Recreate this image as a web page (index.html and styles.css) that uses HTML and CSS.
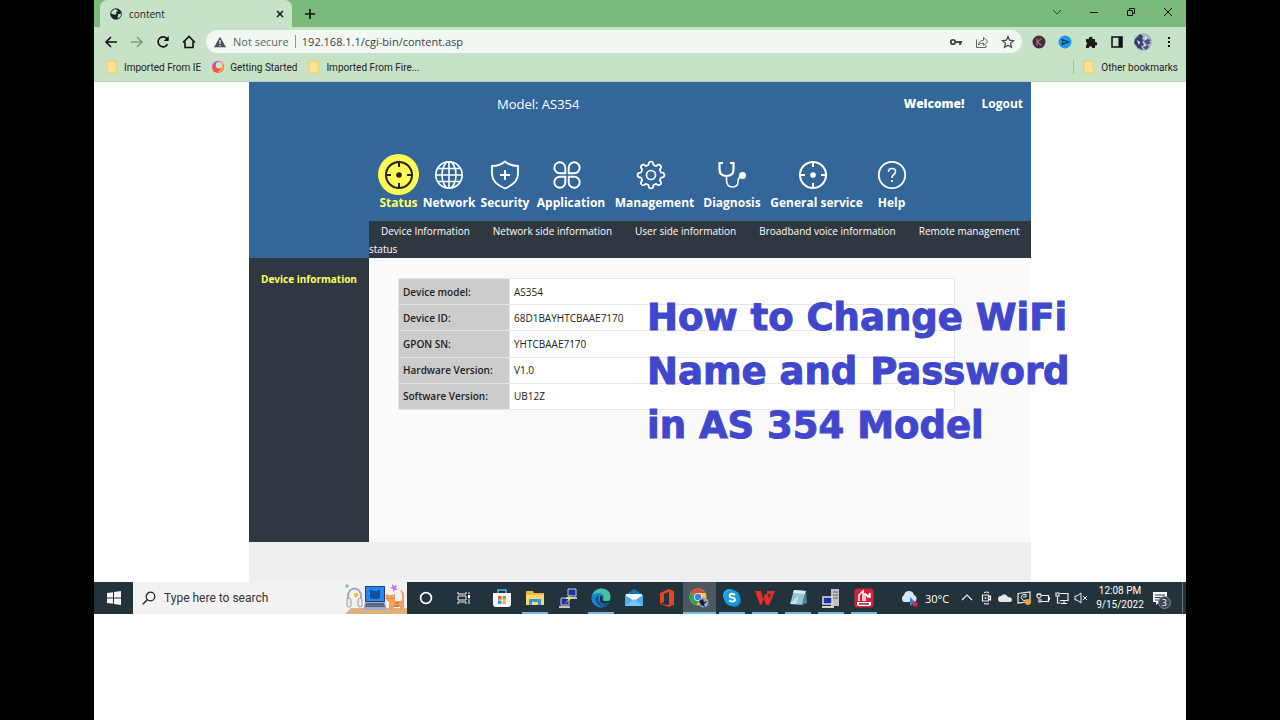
FILE: index.html
```html
<!DOCTYPE html>
<html lang="en">
<head>
<meta charset="utf-8">
<title>content</title>
<link rel="stylesheet" href="styles.css">
</head>
<body>
<svg class="defs" aria-hidden="true">
  <symbol id="target" viewBox="0 0 30 30"><circle cx="15" cy="15" r="13" fill="none" stroke="currentColor" stroke-width="2"/><circle cx="15" cy="15" r="2.8" fill="currentColor"/><path d="M15 2v5M15 23v5M2 15h5M23 15h5" stroke="currentColor" stroke-width="2"/></symbol>
  <symbol id="folder" viewBox="0 0 12 14"><path d="M1 1h9v8l1 1v3H1z" fill="#fde293" stroke="#f3cb63"/></symbol>
</svg>
<div class="screen">
  <header class="browser">
    <div class="tabs">
      <div class="tab">
        <svg class="i12" viewBox="0 0 12 12"><circle cx="6" cy="6" r="5.8" fill="#20252b"/><path d="M6 1.2 8 3 6 4 6.5 6 4.5 6.8 1 5.2Q2 1.5 6 1.2zM8 6.5l3-1q.2 3.5-3.4 5z" fill="#c6e2c7"/></svg>
        <span>content</span>
        <button class="close" aria-label="Close tab"><svg class="i10" viewBox="0 0 10 10"><path d="m2 2 6 6M8 2 2 8" stroke="#111" stroke-width="1.5"/></svg></button>
      </div>
      <button class="new" aria-label="New tab"><svg class="i12" viewBox="0 0 12 12"><path d="M6 1v10M1 6h10" stroke="#111" stroke-width="1.6"/></svg></button>
      <div class="window">
        <button aria-label="Search tabs"><svg class="i12" viewBox="0 0 12 12"><path d="m2 4 4 4 4-4" fill="none" stroke="#234b25"/></svg></button>
        <button aria-label="Minimize"><svg class="i12" viewBox="0 0 12 12"><path d="M2 6.500h8" stroke="#111"/></svg></button>
        <button aria-label="Restore"><svg class="i12" viewBox="0 0 12 12"><path d="M2.500 4.500h5v5h-5zM4.500 4V2.500h5v5H8" fill="none" stroke="#111"/></svg></button>
        <button aria-label="Close"><svg class="i12" viewBox="0 0 12 12"><path d="m2 2 8 8M10 2 2 10" stroke="#111"/></svg></button>
      </div>
    </div>
    <div class="toolbar">
      <button aria-label="Back"><svg class="i14" viewBox="0 0 14 14"><path d="M13 7H2M7 2 2 7l5 5" fill="none" stroke="#111" stroke-width="1.600"/></svg></button>
      <button aria-label="Forward"><svg class="i14" viewBox="0 0 14 14"><path d="M1 7h11M7 2l5 5-5 5" fill="none" stroke="#7d9c80" stroke-width="1.600"/></svg></button>
      <button aria-label="Reload"><svg class="i14" viewBox="0 0 14 14"><path d="M11.500 9.200A5 5 0 1 1 10.800 3.500L12 5" fill="none" stroke="#111" stroke-width="1.600"/><path d="M12.700 1v5h-5z" fill="#111"/></svg></button>
      <button aria-label="Home"><svg class="i14" viewBox="0 0 14 14"><path d="M1 7.500 7 1.500l6 6M3 6.500v6h8v-6" fill="none" stroke="#111" stroke-width="1.600"/></svg></button>
      <div class="address">
        <svg class="i12" viewBox="0 0 12 12"><path d="M6 .8 12 11.200H0z" fill="#4d5156"/><path d="M6 4v4M6 9v1.300" stroke="#f1f8f1" stroke-width="1.200"/></svg>
        <span class="secure">Not secure</span>
        <input aria-label="Address" value="192.168.1.1/cgi-bin/content.asp">
        <button aria-label="Passwords"><svg class="i14" viewBox="0 0 14 14"><circle cx="4" cy="7" r="2.200" fill="none" stroke="#444" stroke-width="1.800"/><path d="M6 7h7M11.200 7v3" stroke="#444" stroke-width="2"/></svg></button>
        <button aria-label="Share"><svg class="i14" viewBox="0 0 14 14"><path d="M1.500 4.500v8H11V10M3.500 10q.5-4.500 5-4.700V2.500l4.500 4-4.500 4V8q-3 0-5 2z" fill="none" stroke="#666"/></svg></button>
        <button aria-label="Bookmark"><svg class="i14" viewBox="0 0 14 14"><path d="m7 1.500 1.600 3.700 4 .4-3 2.700.9 4L7 10.200l-3.500 2.100.9-4-3-2.700 4-.4z" fill="none" stroke="#444" stroke-width="1.200"/></svg></button>
      </div>
      <div class="extensions">
        <button aria-label="K extension"><svg class="i14" viewBox="0 0 14 14"><circle cx="7" cy="7" r="6.500" fill="#34333f"/><path d="M5 3.500v7M9.500 3.500 5.500 7l4 3.500" fill="none" stroke="#c9566b" stroke-width="1.500"/></svg></button>
        <button aria-label="Play extension"><svg class="i14" viewBox="0 0 14 14"><circle cx="7" cy="7" r="6.500" fill="#1d9bf0"/><path d="M3 3.500 12 7l-9 3.500 1.500-3.500z" fill="#12304f"/><path d="M5 7h3" stroke="#5cc0ff"/></svg></button>
        <button aria-label="Extensions"><svg class="i14" viewBox="0 0 14 14"><path d="M2 4h3a1.800 1.800 0 1 1 3.500 0H11v3a1.800 1.800 0 1 1 0 3.500V13H8.200a1.700 1.700 0 0 0-3.400 0H2v-3a1.600 1.600 0 0 0 0-3z" fill="#1b1f1c"/></svg></button>
        <button aria-label="Side panel"><svg class="i14" viewBox="0 0 14 14"><path d="M2 2h10v10H2z" fill="none" stroke="#111" stroke-width="1.500"/><path d="M8.500 2H12v10H8.500z" fill="#111"/></svg></button>
        <button aria-label="Profile"><svg class="i18" viewBox="0 0 18 18"><circle cx="9" cy="9" r="9" fill="#a9b6ca"/><path d="M1 6 6 1l3 2-1 3 2 1-2 2 2 3-3 1 2 4-5-2-4-5z" fill="#3b3c66"/><path d="m10 8 4-2 3 1-2 2 2 1-4 2zM9 14l4-2 2 2-3 3z" fill="#4a4e7b"/><path d="m3 7 3 2-1 3zM11 3l2 2-2 2zM10 12l2-1-1 3z" fill="#eef2f7"/></svg></button>
        <button aria-label="Menu"><svg class="i14" viewBox="0 0 14 14"><path d="M6 2h2v2H6zM6 6h2v2H6zM6 10h2v2H6z" fill="#111"/></svg></button>
      </div>
    </div>
    <nav class="bookmarks">
      <a href="#"><svg class="fold"><use href="#folder"/></svg>Imported From IE</a>
      <a href="#"><svg class="i12" viewBox="0 0 12 12"><circle cx="6" cy="6" r="6" fill="#f9513f"/><path d="M0 6Q1 1 6 0L5 4Z" fill="#9a62cf"/><path d="M10 2q3 4 1 7-2 3-6 2 5-2 5-9z" fill="#ffa13c"/><circle cx="7" cy="4.300" r="3.200" fill="#d3e2db"/></svg>Getting Started</a>
      <a href="#"><svg class="fold"><use href="#folder"/></svg>Imported From Fire...</a>
      <a class="other" href="#"><svg class="fold"><use href="#folder"/></svg>Other bookmarks</a>
    </nav>
  </header>

  <main class="viewport">
    <div class="router">
      <div class="brand"></div>
      <div class="top">
        <div class="account"><span class="model">Model: AS354</span><strong>Welcome!</strong><a href="#">Logout</a></div>
        <nav class="menu">
          <a class="active" href="#"><span class="pic"><svg><use href="#target"/></svg></span>Status</a>
          <a href="#"><span class="pic"><svg viewBox="0 0 30 30"><g fill="none" stroke="currentColor" stroke-width="1.600"><circle cx="15" cy="15" r="13.200"/><ellipse cx="15" cy="15" rx="7" ry="13.200"/><path d="M15 2v26M2 15h26M4 8.500h22M4 21.500h22"/></g></svg></span>Network</a>
          <a href="#"><span class="pic"><svg viewBox="0 0 30 30"><path d="M15 1.500q5 4.500 13 4.500v8q0 9-13 14.500Q2 23 2 14V6q8 0 13-4.500z" fill="none" stroke="currentColor" stroke-width="1.800"/><path d="M15 10v10M10 15h10" stroke="currentColor" stroke-width="2"/></svg></span>Security</a>
          <a class="wide" href="#"><span class="pic"><svg viewBox="0 0 30 30"><path d="M13.300 13.300H7.800a5.500 5.500 0 1 1 5.500-5.500zM16.700 13.300h5.500a5.500 5.500 0 1 0-5.500-5.500zM13.300 16.700H7.800a5.500 5.500 0 1 0 5.500 5.500zM16.700 16.700h5.500a5.500 5.500 0 1 1-5.500 5.500z" fill="none" stroke="currentColor" stroke-width="1.900"/></svg></span>Application</a>
          <a class="wide" href="#"><span class="pic"><svg viewBox="0 0 30 30"><g fill="none" stroke="currentColor" stroke-width="1.700" stroke-linejoin="round"><circle cx="15" cy="15" r="4.500"/><path d="M12.500 5q0-3.500 2.500-3.500T17.500 5l2.700 1.100q2.500-2.500 4.200-.7t-.6 4.300L25 12.500q3.500 0 3.500 2.500T25 17.500l-1.200 2.800q2.400 2.500.6 4.200t-4.200-.6L17.500 25q0 3.500-2.500 3.500T12.500 25l-2.700-1.100q-2.500 2.400-4.200.6t.6-4.200L5 17.500q-3.500 0-3.500-2.500T5 12.500l1.200-2.800Q3.800 7.200 5.600 5.400t4.200.7z"/></g></svg></span>Management</a>
          <a href="#"><span class="pic"><svg viewBox="0 0 30 30"><g fill="none" stroke="currentColor" stroke-width="2.200"><path d="M6 3H2.500v6q0 7 7 7t7-7V3H13"/><path d="M9.500 16v4q0 7 6 7 5.500 0 5.500-5.500 0-5 5-5.500" stroke-width="1.500"/></g><circle cx="25.500" cy="15.500" r="3.500" fill="currentColor"/></svg></span>Diagnosis</a>
          <a class="wide" href="#"><span class="pic"><svg><use href="#target"/></svg></span>General service</a>
          <a href="#"><span class="pic"><svg viewBox="0 0 30 30"><circle cx="15" cy="15" r="13.200" fill="none" stroke="currentColor" stroke-width="1.800"/><path d="M11.500 12q0-3.500 3.500-3.500t3.500 3q0 1.800-1.800 3T15 18" fill="none" stroke="currentColor" stroke-width="1.600"/><circle cx="15" cy="21" r="1.100" fill="currentColor"/></svg></span>Help</a>
        </nav>
      </div>
      <nav class="submenu"><a href="#">Device Information</a><a href="#">Network side information</a><a href="#">User side information</a><a href="#">Broadband voice information</a><a href="#">Remote management status</a></nav>
      <aside class="side"><a href="#">Device information</a></aside>
      <section class="content">
        <table>
          <tr><th scope="row">Device model:</th><td>AS354</td></tr>
          <tr><th scope="row">Device ID:</th><td>68D1BAYHTCBAAE7170</td></tr>
          <tr><th scope="row">GPON SN:</th><td>YHTCBAAE7170</td></tr>
          <tr><th scope="row">Hardware Version:</th><td>V1.0</td></tr>
          <tr><th scope="row">Software Version:</th><td>UB12Z</td></tr>
        </table>
      </section>
      <div class="foot"></div>
    </div>
    <h1 class="caption">How to Change WiFi<br>Name and Password<br>in AS 354 Model</h1>
  </main>

  <footer class="taskbar">
    <button class="start" aria-label="Start"><svg class="i14" viewBox="0 0 14 14"><path d="m0 2 6-.8v5.300H0zM7 1l7-1v6.500H7zM0 7.500h6v5.300L0 12zM7 7.500h7V14l-7-1z" fill="#f4f8fa"/></svg></button>
    <label class="search"><svg class="i14" viewBox="0 0 14 14"><circle cx="8.500" cy="5.500" r="4.300" fill="none" stroke="#222" stroke-width="1.200"/><path d="M5.500 8.500.8 13.200" stroke="#222" stroke-width="1.300"/></svg><input aria-label="Search" placeholder="Type here to search">
      <svg class="art" viewBox="0 0 62 31"><path d="M0 31 6 25h56v6z" fill="#dcb27f"/><path d="M3 19V13a6.500 7.500 0 0 1 13 0v7" fill="none" stroke="#a9a7b5" stroke-width="2"/><rect x="2" y="15" width="4" height="9" rx="2" fill="#eee" stroke="#999"/><rect x="13" y="15" width="4" height="9" rx="2" fill="#eee" stroke="#999"/><circle cx="11" cy="12" r="2.200" fill="#ffb92e"/><circle cx="2" cy="3" r="1.800" fill="#67d1bd"/><path d="M20 3h20v16H20z" fill="#273b75"/><path d="M21 4h18v14H21z" fill="#2489ec"/><path d="m25 6 3 2h4l3-2v9q-5 2-10 0z" fill="#134c9e"/><path d="M20 19h20l2 8H18z" fill="#a6abc5"/><path d="M21 20h18l1 4H20z" fill="#62688c"/><path d="m47 1 2 2 3-1-1 3 2 2-3 0-2 2 0-3-3-1 2-1z" fill="#c879eb"/><path d="m41 11 3 1h3l3-1v7h5q3 0 2-5 0-4-2-5l1-1q4 2 3 8v12h-4v-3h-6v3h-5v-8q-5-2-3-8z" fill="#f2a15d"/><path d="M43 15v1M47 15v1M50 20h4M49 23h5" stroke="#ac582d"/></svg>
    </label>
    <button class="tool" aria-label="Cortana"><svg class="i14" viewBox="0 0 14 14"><circle cx="7" cy="7" r="5.400" fill="none" stroke="#fff" stroke-width="1.700"/></svg></button>
    <button class="tool" aria-label="Task view"><svg class="i14" viewBox="0 0 14 14"><path d="M1 1v2h8V1M1 13v-2h8v2M1 5h8v4H1zM12 1v2M12 7.500V13" fill="none" stroke="#eee"/><path d="M11 4h2v3h-2z" fill="#fff"/></svg></button>
    <div class="apps">
      <button aria-label="Store"><svg viewBox="0 0 20 20"><path d="M6 5V2h8v3" fill="none" stroke="#4abbe4" stroke-width="1.500"/><path d="M1 5h18v11q0 3-3 3H4q-3 0-3-3z" fill="#f6f7f8"/><path d="M6 8h3.500v3.500H6z" fill="#e7593d"/><path d="M10.500 8H14v3.500h-3.500z" fill="#7cb63c"/><path d="M6 12.500h3.500V16H6z" fill="#289ddd"/><path d="M10.500 12.500H14V16h-3.500z" fill="#f2b52f"/></svg></button>
      <button class="open" aria-label="File Explorer"><svg viewBox="0 0 20 20"><path d="M1 3h7l1 2h10v12H1z" fill="#eeb744"/><path d="M1 7h18v10H1z" fill="#ffd770"/><path d="M4 17v-6h12v6h-3v-3H7v3z" fill="#4092cb"/></svg></button>
      <button aria-label="Terminal"><svg viewBox="0 0 20 20"><path d="M10 1h8v7h-8zM3 10h8v7H3z" fill="#1930ae" stroke="#c5cad3"/><path d="M8 9h11v2H8zM1 18h11v2H1z" fill="#bfc4cb"/><path d="m14 6-7 5h4l-5 5 8-6h-4z" fill="#f7e849"/></svg></button>
      <button class="open" aria-label="Edge"><svg viewBox="0 0 20 20"><circle cx="10" cy="10" r="9.500" fill="#1689d8"/><path d="M.8 8Q4 0 11 .5q8 .5 8.500 8 0 5-6 4.500-2 0-1-2Q14 5 8 5T.8 8z" fill="#42c6a0"/><path d="M8 7q-5 2-3 7 2 5 8 5Q8 20 4 17-1 13 1 8q3-3 7-1z" fill="#1683d2"/><path d="M8 7q-5 2-3 7 3 5 8 5 4-1 5-4-7 3-10-2-1-3 0-6z" fill="#1753a5"/><path d="M9 8q3-1 3 2-2 3 2 3h5l-1 2q-7 2-9-2z" fill="#24343c"/></svg></button>
      <button aria-label="Mail"><svg viewBox="0 0 20 20"><path d="M1 7 10 1l9 6v11H1z" fill="#1373ba"/><path d="M2 6h16v8H2z" fill="#f4f7fa"/><path d="m1 7 9 6 9-6v11H1z" fill="#47aef2"/><path d="m1 18 9-7 9 7z" fill="#75c7fa"/></svg></button>
      <button aria-label="Office"><svg viewBox="0 0 20 20"><path d="m3 5 9-4 5 2v14l-5 2-9-3 9 1V4L7 6v8l-4 2z" fill="#e64320"/></svg></button>
      <button class="open current" aria-label="Chrome"><svg viewBox="0 0 20 20"><circle cx="9" cy="9" r="8.500" fill="#f4c734"/><path d="M9 9 2 4Q9-3 17 5H9z" fill="#e44636"/><path d="M9 9 2 4q-4 9 5 13.500l3-5z" fill="#31a457"/><circle cx="9" cy="9" r="4" fill="#f7f7f7"/><circle cx="9" cy="9" r="3.200" fill="#3c7cf0"/><circle cx="14.500" cy="14.500" r="5" fill="#9aabc0"/><path d="m10 13 4-2 1 3 4-1-4 3 1 3-4-2z" fill="#171d3b"/></svg></button>
      <button class="open" aria-label="Skype"><svg viewBox="0 0 20 20"><circle cx="7.500" cy="7.500" r="6.500" fill="#28b8f4"/><circle cx="12.500" cy="12.500" r="6.500" fill="#0785d2"/><circle cx="10" cy="10" r="8" fill="#159ee1"/><path d="M13 7q-3-2-5-.5-1.500 2 1.500 3 4 .7 3.500 2.700-1 2.500-6 .3" fill="none" stroke="#fff" stroke-width="2"/></svg></button>
      <button class="open" aria-label="WPS Office"><svg viewBox="0 0 20 20"><path d="M0 3h6l2 8 2-5h3l1 5 2-5h-4V3h8l-6 14h-3l-2-6-3 6H5z" fill="#e43127"/></svg></button>
      <button class="open" aria-label="Notepad"><svg viewBox="0 0 20 20"><path d="m6 2 12 1-4 14-12-1z" fill="#8ec8ce"/><path d="m6 2 12 1-1 3-12-1z" fill="#d9eeee"/><path d="m2 16 9-9-3 9z" fill="#c7e6e8"/><path d="m18 3 1 12-5 2z" fill="#4c8491"/></svg></button>
      <button class="open" aria-label="Remote desktop"><svg viewBox="0 0 20 20"><path d="M10 1h8v17h-8z" fill="#bdc1c3"/><path d="M12 4h5M12 7h5M12 10h5" stroke="#666"/><path d="M2 9h9v7H2z" fill="#1831b0" stroke="#ddd" stroke-width="1.500"/><path d="M1 18h12v2H1z" fill="#d1d3d4"/></svg></button>
      <button class="open" aria-label="Image converter"><svg viewBox="0 0 20 20"><rect x=".5" y=".5" width="19" height="19" rx="3" fill="#d2233d"/><path d="M5 13V7l4-4v10M11 13V5M12 6l2 3 2-4v5" fill="none" stroke="#fff" stroke-width="1.500"/><path d="M3 14h14v3l-2 1H5l-2-1z" fill="#fff"/><path d="M5 16h10" stroke="#54343a" stroke-width="1.500"/></svg></button>
    </div>
    <div class="tray">
      <svg class="i18" viewBox="0 0 18 18"><path d="M4 13a4 4 0 0 1 0-7q1-4 5-4t5 4a4 4 0 0 1 1 7z" fill="#d6e7f8"/><path d="m10 8 5 5-5 4z" fill="#2786db"/><circle cx="15" cy="15" r="2.600" fill="#df243e"/></svg>
      <span class="temp">30°C</span>
      <svg class="i14 tray-icon" viewBox="0 0 14 14"><path d="m2 9 5-5 5 5" fill="none" stroke="#eee" stroke-width="1.200"/></svg>
      <svg class="i14 tray-icon" viewBox="0 0 14 14"><path d="M5 1.500q3-1 5 0M5 12.500q3 1 5 0M3.500 4h6v6h-6zM9.500 6l2-1v4l-2-1" fill="none" stroke="#eee" stroke-width="1.200"/><circle cx="6.500" cy="7" r="1" fill="#eee"/></svg>
      <svg class="i14 tray-icon" viewBox="0 0 14 14"><path d="M3 11a3 3 0 0 1 0-6q4-4 7 1 4 0 4 3 0 2-2 2z" fill="#e6e6e6"/></svg>
      <svg class="i14 tray-icon" viewBox="0 0 14 14"><path d="M1 2.500 13 1v9.500L1 12z" fill="none" stroke="#eee" stroke-width="1.200"/><path d="M9 4a3 3 0 1 0 0 5M9 3v3H6" fill="none" stroke="#eee"/><circle cx="11" cy="11" r="3" fill="#f5a01b"/></svg>
      <svg class="i14 tray-icon" viewBox="0 0 14 14"><path d="M6 4.500h6.500v6H5V8M12.500 6.500h1v2h-1M1 3.500h4v2q-2 3-4 0zM2 2v2M4 2v2M3 7v4h2" fill="none" stroke="#eee" stroke-width="1.200"/></svg>
      <svg class="i14 tray-icon" viewBox="0 0 14 14"><path d="M5 2.500h8v7H5M9 10v2M6 12.500h6M1 2h3v3H1zM2.500 5v7h3" fill="none" stroke="#eee" stroke-width="1.200"/></svg>
      <svg class="i14 tray-icon" viewBox="0 0 14 14"><path d="M1 5h2l4-3v10L3 9H1zM9 5l4 4M13 5 9 9" fill="none" stroke="#eee"/></svg>
      <time class="clock"><span>12:08 PM</span><span>9/15/2022</span></time>
      <button class="notices" aria-label="3 notifications"><svg class="i14" viewBox="0 0 14 14"><path d="M0 1h14v10H6l-3 3v-3H0z" fill="#fff"/><path d="M2 4h10M2 6.500h10M2 9h6" stroke="#273840"/></svg><span class="count">3</span></button>
    </div>
  </footer>
</div>
</body>
</html>
```
FILE: styles.css
```css
* { box-sizing: border-box; }
body { margin: 0; background: #000; font-family: "Open Sans", "Noto Sans", sans-serif; font-size: 12px; color: #222; }
button, input { font: inherit; color: inherit; border: 0; padding: 0; background: none; }
button { display: flex; align-items: center; justify-content: center; flex-shrink: 0; }
a { color: inherit; text-decoration: none; }
svg { display: block; flex-shrink: 0; }
.defs { display: none; }
.i10 { width: 10px; height: 10px; }
.i12 { width: 12px; height: 12px; }
.i14 { width: 14px; height: 14px; }
.i18 { width: 18px; height: 18px; }
.fold { width: 12px; height: 14px; }
.screen { margin: 0 94px; min-height: 100vh; background: #fff; }

.browser { background: #c6e2c7; border-bottom: 1px solid #c3c9c3; }
.tabs { display: flex; height: 27px; background: #7aba7b; padding-left: 6px; }
.tab { display: flex; align-items: center; gap: 7px; width: 192px; padding: 0 7px 0 10px; background: #c6e2c7; border-radius: 7px 7px 0 0; font-size: 10px; }
.close { margin-left: auto; }
.new { width: 36px; }
.window { display: flex; margin-left: auto; padding-bottom: 4px; }
.window button { width: 37px; }
.toolbar { display: flex; align-items: center; height: 29px; padding: 0 4px; }
.toolbar > button { width: 26px; }
.address { display: flex; align-items: center; flex: 1; height: 23px; margin-left: 4px; padding: 0 1px 0 8px; border-radius: 12px; background: #f1f8f1; font-size: 11px; color: #5f6368; }
.secure { margin: 0 6px 0 7px; padding-right: 6px; border-right: 1px solid #8f9691; line-height: 13px; }
.address input { flex: 1; min-width: 0; color: #3c4043; }
.address button { width: 26px; }
.extensions { display: flex; margin-left: 4px; }
.extensions button { width: 26px; }
.bookmarks { display: flex; align-items: center; gap: 11px; height: 25px; padding: 0 8px 3px 12px; font-family: Roboto, "Open Sans", sans-serif; font-size: 10px; }
.bookmarks a { display: flex; align-items: center; gap: 6px; }
.bookmarks .other { margin-left: auto; padding-left: 9px; border-left: 1px solid #a4b9a5; }

.viewport { position: relative; display: flex; justify-content: center; min-height: 500px; background: #fff; }
.router { display: grid; grid-template-columns: 120px 1fr; grid-template-rows: auto auto 1fr 40px; width: 782px; }
.brand { grid-row: 1 / 3; background: #336699; }
.top { background: #336699; color: #fff; }
.account { display: flex; align-items: center; gap: 17px; height: 43px; padding-right: 8px; font-size: 12px; font-weight: 700; }
.model { margin: 0 auto 0 128px; font-size: 13px; font-weight: 400; }
.menu { display: grid; grid-template-columns: 43px 58px 54px 78px 89px 66px 103px 47px; padding: 29px 0 10px 8px; font-size: 12px; font-weight: 700; line-height: 16px; white-space: nowrap; }
.menu a { display: flex; flex-direction: column; align-items: center; }
.pic { display: flex; align-items: center; justify-content: center; width: 41px; height: 41px; border-radius: 50%; }
.pic svg { width: 30px; height: 30px; }
.wide .pic { margin-right: 8px; }
.active { color: #ffff66; }
.active .pic { color: #222; background: #fdf955; }
.submenu { background: #2f3740; color: #fff; font-size: 10px; line-height: 18px; padding: 1px 0 0; }
.submenu a { padding-left: 12px; margin-right: 11px; }
.side { padding: 13px 12px; background: #2f3740; color: #ffff66; font-size: 10px; font-weight: 700; line-height: 16px; }
.content { padding: 20px 76px 20px 29px; background: #fafafa; }
table { width: 100%; height: 132px; border-collapse: collapse; font-size: 10px; background: #fff; }
th, td { padding: 0 4px; border: 1px solid #e6e6e6; text-align: left; }
th { width: 111px; background: #ccc; font-weight: 600; }
.foot { grid-column: 1 / 3; background: #efefef; }
.caption { position: absolute; left: 553px; top: 209px; margin: 0; font-family: "DejaVu Sans", sans-serif; font-size: 37px; font-weight: 700; line-height: 54px; color: #3f48cc; -webkit-text-stroke: 1px #3f48cc; white-space: nowrap; }

.taskbar { display: flex; height: 32px; background: #22333b; color: #fff; }
.start { width: 39px; }
.search { display: flex; align-items: center; width: 274px; padding-left: 9px; gap: 8px; background: #f2f2f2; color: #333; font-family: Roboto, "Open Sans", sans-serif; font-size: 12px; }
.search input { flex: 1; min-width: 0; }
.search input::placeholder { color: #333; opacity: 1; }
.art { width: 62px; height: 31px; }
.tool { width: 38px; }
.apps { display: grid; grid-template-columns: repeat(12, 1fr); width: 394px; margin-left: 3px; }
.apps svg { width: 20px; height: 20px; }
.open { background: linear-gradient(#76b9ed, #76b9ed) center bottom / 26px 2px no-repeat; }
.current { background-color: #4c585f; background-size: 100% 2px; }
.tray { display: flex; align-items: center; flex: 1; margin-left: 20px; margin-right: 3px; border-right: 1px solid #65747a; }
.temp { margin: 0 11px 0 7px; font-size: 11px; }
.tray-icon { margin-right: 5px; }
.clock { display: flex; flex-direction: column; align-items: center; font-family: Roboto, "Open Sans", sans-serif; margin-left: 3px; font-size: 10px; line-height: 14px; }
.notices { position: relative; margin-left: 9px; }
.count { position: absolute; left: 5px; top: 5px; width: 13px; height: 13px; border-radius: 50%; background: #3c4a51; border: 1px solid #889; font-size: 9px; line-height: 11px; }
```
